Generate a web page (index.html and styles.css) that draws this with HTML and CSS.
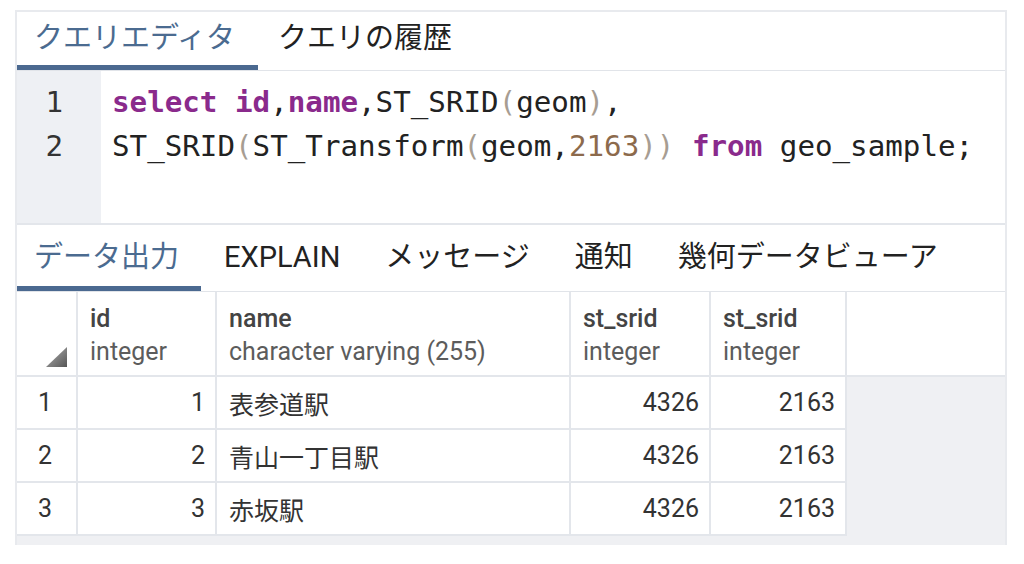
FILE: index.html
```html
<!DOCTYPE html>
<html>
<head>
	<meta charset="utf-8">
	<title>クエリエディタ</title>
	<link rel="stylesheet" href="styles.css">
</head>
<body>
<div class="panel">
	<ul class="tabs">
		<li class="current">クエリエディタ</li>
		<li>クエリの履歴</li>
	</ul>
	<div class="editor">
		<div class="gutter">
			<div>1</div>
			<div>2</div>
		</div>
		<div class="code">
			<div><span class="kw">select</span> <span class="kw">id</span>,<span class="kw">name</span>,ST_SRID<span class="br">(</span>geom<span class="br">)</span>,</div>
			<div>ST_SRID<span class="br">(</span>ST_Transform<span class="br">(</span>geom,<span class="num">2163</span><span class="br">))</span> <span class="kw">from</span> geo_sample;</div>
		</div>
	</div>
	<ul class="tabs tabs-out">
		<li class="current">データ出力</li>
		<li>EXPLAIN</li>
		<li>メッセージ</li>
		<li>通知</li>
		<li>幾何データビューア</li>
	</ul>
	<div class="grid">
		<table>
			<colgroup>
				<col style="width:61px">
				<col style="width:139px">
				<col style="width:354px">
				<col style="width:140px">
				<col style="width:136px">
				<col>
			</colgroup>
			<thead>
				<tr>
					<th class="corner"><span class="sort"></span></th>
					<th><b>id</b><span>integer</span></th>
					<th><b>name</b><span>character varying (255)</span></th>
					<th><b>st_srid</b><span>integer</span></th>
					<th><b>st_srid</b><span>integer</span></th>
					<th class="fill"></th>
				</tr>
			</thead>
			<tbody>
				<tr>
					<td class="rn">1</td>
					<td class="r">1</td>
					<td>表参道駅</td>
					<td class="r">4326</td>
					<td class="r">2163</td>
					<td class="empty"></td>
				</tr>
				<tr>
					<td class="rn">2</td>
					<td class="r">2</td>
					<td>青山一丁目駅</td>
					<td class="r">4326</td>
					<td class="r">2163</td>
					<td class="empty"></td>
				</tr>
				<tr>
					<td class="rn">3</td>
					<td class="r">3</td>
					<td>赤坂駅</td>
					<td class="r">4326</td>
					<td class="r">2163</td>
					<td class="empty"></td>
				</tr>
			</tbody>
		</table>
	</div>
</div>
</body>
</html>
```

FILE: styles.css
```css
body,ul,li{margin:0;padding:0;}
ul{list-style-type:none;}
body{background:#fff;color:#222;font-family:Roboto,"Noto Sans CJK JP",sans-serif;}
.panel{width:992px;margin:10px 0 0 15px;border:2px solid #e8eaee;border-bottom-width:0;box-sizing:border-box;background:#fff;}

/* タブ */
.tabs{display:flex;height:58px;border-bottom:1px solid #e1e4e9;}
.tabs li{padding:0 23px 0 20px;font-size:29px;line-height:53px;border-bottom:5px solid transparent;color:#222;}
.tabs li.current{padding-left:17px;color:#4b6b90;border-bottom-color:#4b6990;}
.tabs-out{height:66px;}
.tabs-out li{line-height:57px;padding:4px 22px 0 23px;}
.tabs-out li.current{padding-left:17px;padding-right:22px;}

/* エディタ */
.editor{display:flex;height:152px;border-bottom:2px solid #e3e6eb;font:29.2px/44px "DejaVu Sans Mono",monospace;}
.gutter{width:84px;padding:9px 38px 0 0;box-sizing:border-box;text-align:right;background:#eef0f4;color:#333;}
.code{padding:9px 0 0 11px;color:#222;white-space:nowrap;}
.kw{color:#8a2a8c;font-weight:bold;}
.br{color:#a79d92;}
.num{color:#8c6a4c;}

/* 結果 */
.grid{background:#eff0f3;padding-bottom:9px;}
table{width:100%;border-collapse:separate;border-spacing:0;table-layout:fixed;font-size:25px;}
th,td{box-sizing:border-box;border-right:2px solid #e3e6eb;border-bottom:2px solid #e3e6eb;background:#fff;text-align:left;}
th{height:85px;padding:2px 12px 0;font-weight:normal;vertical-align:middle;line-height:33px;}
th b{display:block;color:#444;font-weight:500;}
th span{display:block;color:#5c5c5c;}
th.corner{vertical-align:bottom;text-align:right;padding:0 9px 8px 0;}
th.fill{border-right:0;}
.sort{display:inline-block;width:21px;height:20px;vertical-align:bottom;clip-path:polygon(100% 0,100% 100%,0 100%);background:linear-gradient(to bottom right,#b4b4b4,#555);}
td{height:53px;padding:0 12px;color:#333;}
td.rn{padding-left:21px;}
td.r{text-align:right;padding-right:10px;}
td.empty{background:transparent;border:0;}
```
